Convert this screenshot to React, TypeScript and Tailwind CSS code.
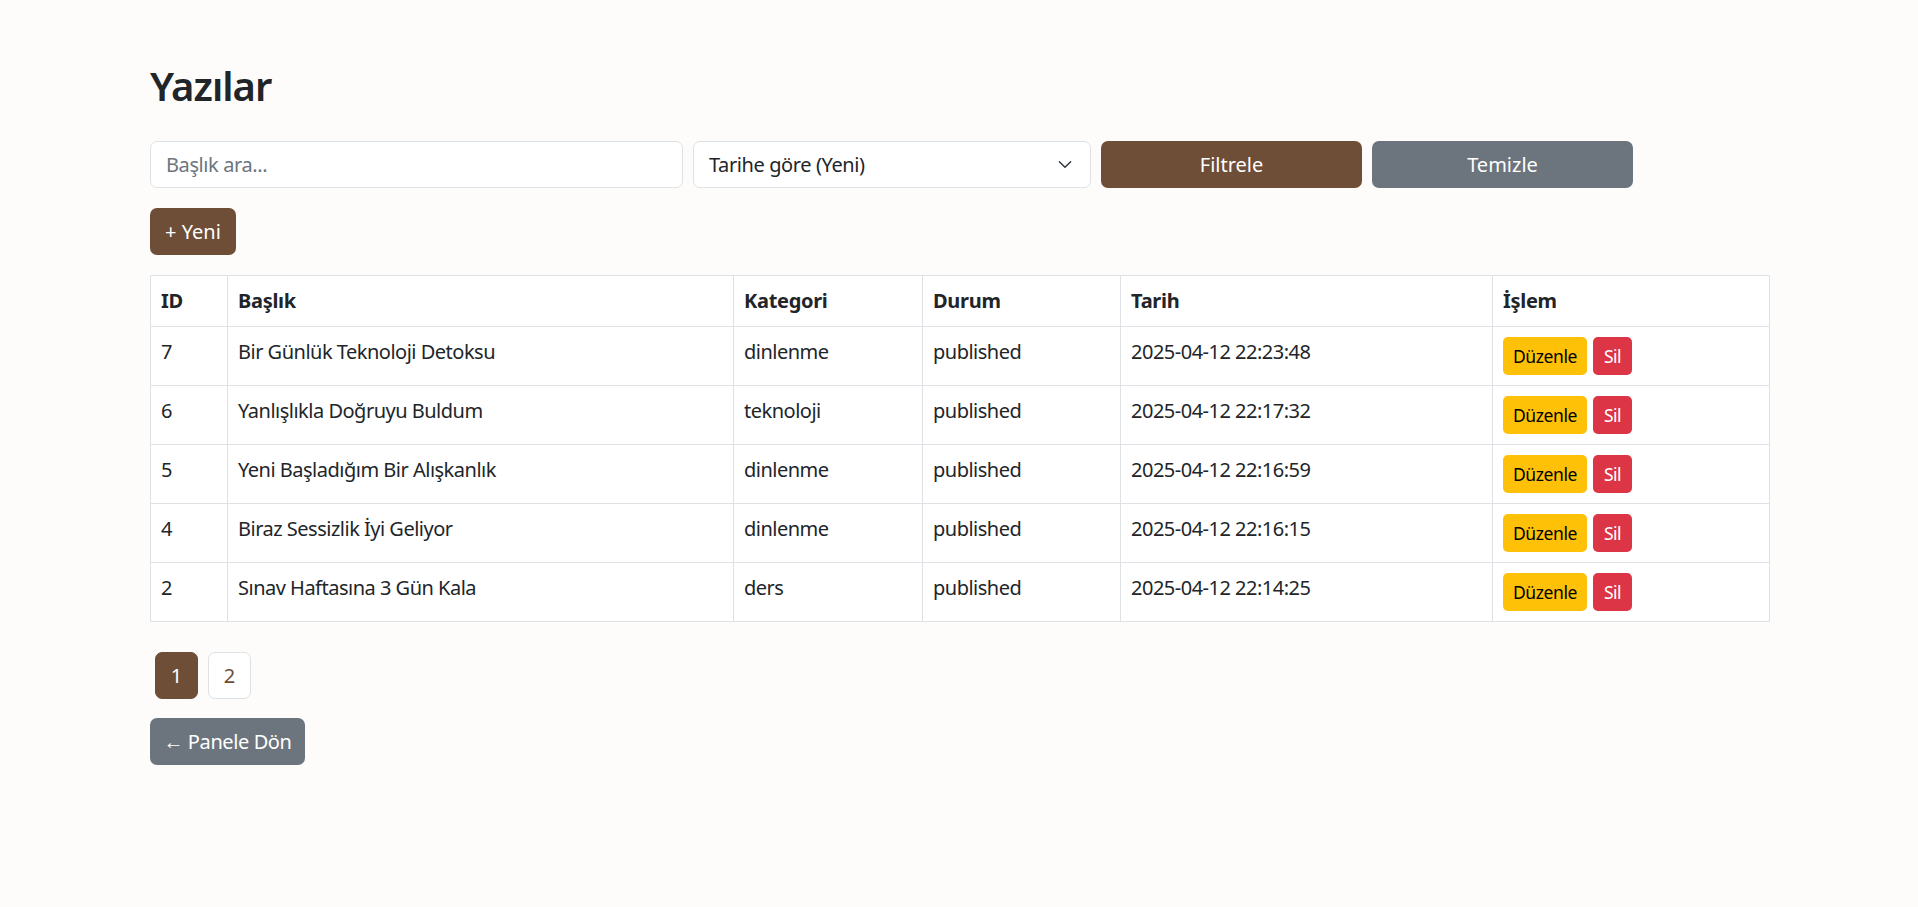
import { useState } from 'react'

type Post = {
  id: number
  title: string
  category: string
  status: string
  date: string
}

const posts: Post[] = [
  { id: 7, title: 'Bir Günlük Teknoloji Detoksu', category: 'dinlenme', status: 'published', date: '2025-04-12 22:23:48' },
  { id: 6, title: 'Yanlışlıkla Doğruyu Buldum', category: 'teknoloji', status: 'published', date: '2025-04-12 22:17:32' },
  { id: 5, title: 'Yeni Başladığım Bir Alışkanlık', category: 'dinlenme', status: 'published', date: '2025-04-12 22:16:59' },
  { id: 4, title: 'Biraz Sessizlik İyi Geliyor', category: 'dinlenme', status: 'published', date: '2025-04-12 22:16:15' },
  { id: 2, title: 'Sınav Haftasına 3 Gün Kala', category: 'ders', status: 'published', date: '2025-04-12 22:14:25' },
]

const th = 'border border-[#dee2e6] px-[10px] py-[10px] text-left align-top font-bold leading-[30px] tracking-[-0.3px]'
const td = 'border border-[#dee2e6] px-[10px] py-[10px] align-top leading-[30px] tracking-[-0.5px]'

export default function App() {
  const [query, setQuery] = useState('')

  return (
    <div className="min-h-[907px] bg-[#fdfcfb] font-['Noto_Sans',sans-serif] text-[20px] text-[#212529]">
      <div className="ml-[150px] w-[1619px] pt-[62px]">
        <h2 className="mb-[31px] text-[40px] font-semibold leading-[48px] tracking-[-1px]">Yazılar</h2>

        <div className="mb-[20px] flex gap-[10px]">
          <input
            value={query}
            onChange={(e) => setQuery(e.target.value)}
            placeholder="Başlık ara..."
            className="h-[47px] w-[533px] rounded-[7px] border border-[#dee2e6] bg-white px-[15px] text-[20px] tracking-[-0.4px] outline-none placeholder:text-[#6c757d]"
          />
          <div className="flex h-[47px] w-[398px] items-center justify-between rounded-[7px] border border-[#dee2e6] bg-white pl-[15px] pr-[15px]">
            <span className="tracking-[-0.4px]">Tarihe göre (Yeni)</span>
            <svg width="20" height="15" viewBox="0 0 16 16" fill="none">
              <path d="m2 5 6 6 6-6" stroke="#343a40" strokeWidth="1.6" strokeLinecap="round" strokeLinejoin="round" />
            </svg>
          </div>
          <button className="h-[47px] w-[261px] rounded-[7px] bg-[#6f4e37] text-white">Filtrele</button>
          <button className="h-[47px] w-[261px] rounded-[7px] bg-[#6c757d] text-white">Temizle</button>
        </div>

        <button className="mb-[20px] h-[47px] w-[86px] rounded-[7px] bg-[#6f4e37] text-white">+ Yeni</button>

        <table className="w-full table-fixed bg-white">
          <colgroup>
            <col className="w-[77px]" />
            <col className="w-[506px]" />
            <col className="w-[189px]" />
            <col className="w-[198px]" />
            <col className="w-[372px]" />
            <col className="w-[277px]" />
          </colgroup>
          <thead>
            <tr>
              <th className={th}>ID</th>
              <th className={th}>Başlık</th>
              <th className={th}>Kategori</th>
              <th className={th}>Durum</th>
              <th className={th}>Tarih</th>
              <th className={th}>İşlem</th>
            </tr>
          </thead>
          <tbody>
            {posts.map((p) => (
              <tr key={p.id}>
                <td className={td}>{p.id}</td>
                <td className={td}>{p.title}</td>
                <td className={td}>{p.category}</td>
                <td className={td}>{p.status}</td>
                <td className={td}>{p.date}</td>
                <td className={td}>
                  <div className="flex h-[38px] gap-[6px]">
                    <button className="h-[38px] w-[84px] rounded-[5px] bg-[#ffc107] text-[17.5px] tracking-[-0.4px] text-black">Düzenle</button>
                    <button className="h-[38px] w-[39px] rounded-[5px] bg-[#dc3545] text-[17.5px] text-white">Sil</button>
                  </div>
                </td>
              </tr>
            ))}
          </tbody>
        </table>

        <div className="mt-[30px] flex">
          <button className="mx-[5px] h-[47px] w-[43px] rounded-[7px] border border-[#6f4e37] bg-[#6f4e37] text-white">1</button>
          <button className="mx-[5px] h-[47px] w-[43px] rounded-[7px] border border-[#dee2e6] bg-white text-[#6f4e37]">2</button>
        </div>

        <button className="mt-[19px] h-[47px] w-[155px] rounded-[7px] bg-[#6c757d] text-white tracking-[-0.4px]">← Panele Dön</button>
      </div>
    </div>
  )
}
